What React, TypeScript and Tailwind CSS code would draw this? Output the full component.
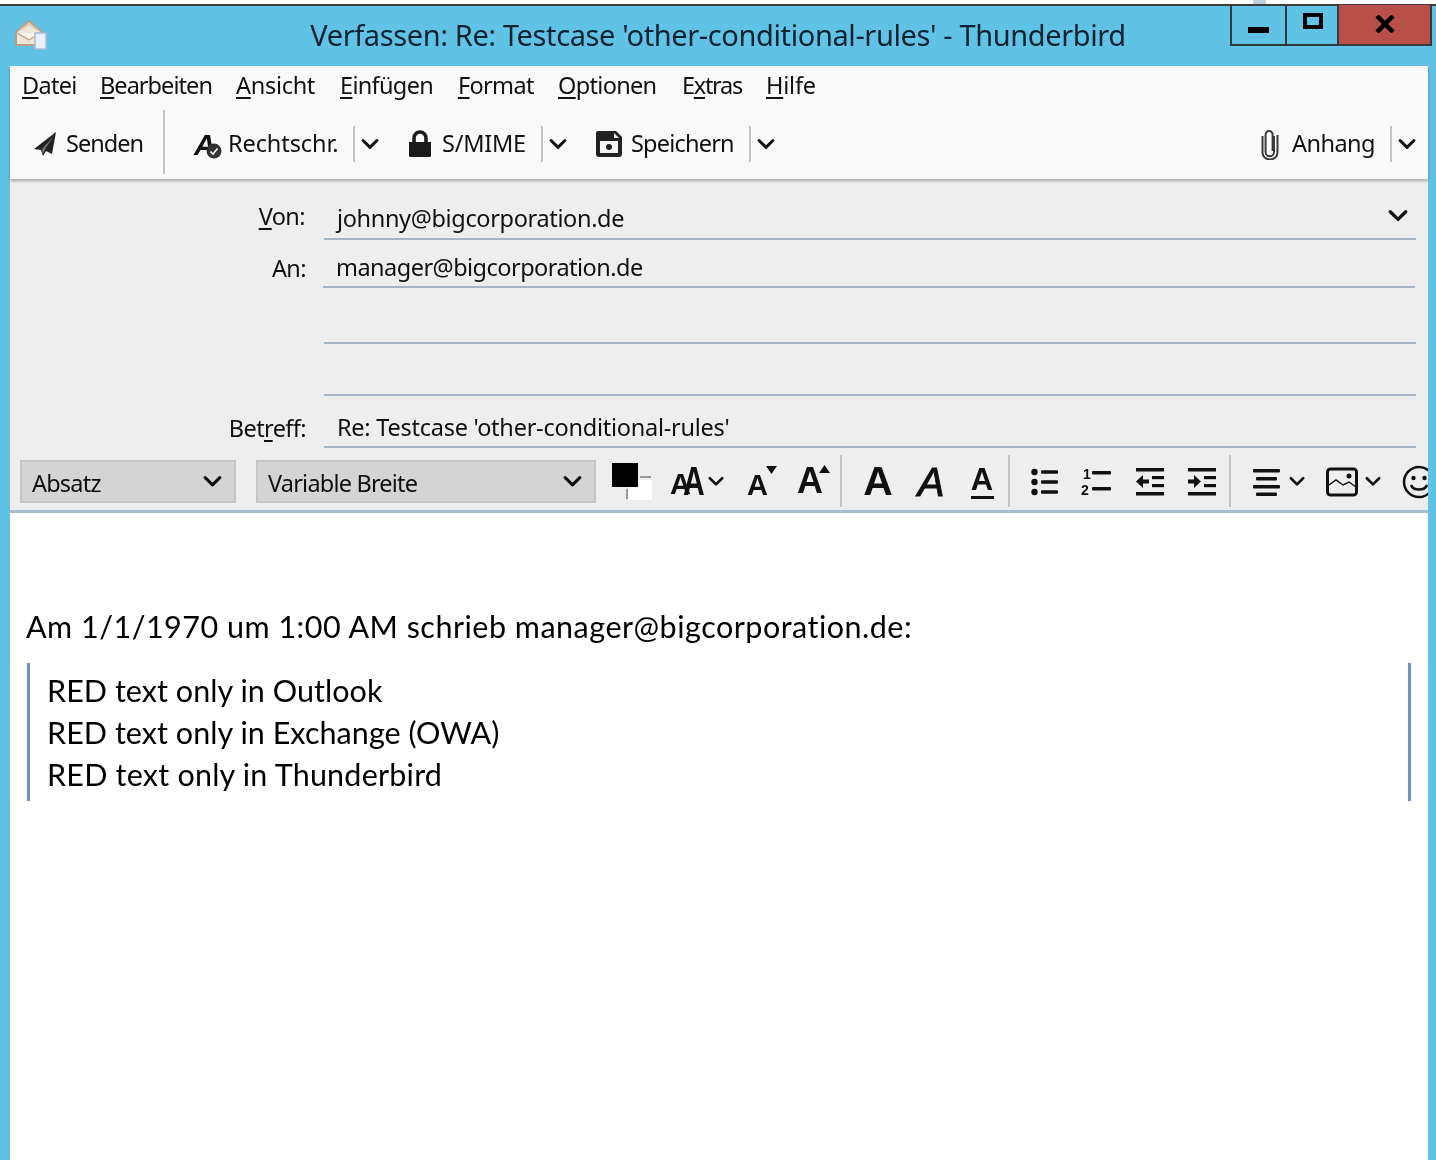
import React from "react";

const ui = { fontFamily: '"Noto Sans", sans-serif' };

function Chevron({ size = 18, sw = 3 }: { size?: number; sw?: number }) {
  return (
    <svg width={size} height={size * 0.66} viewBox="0 0 18 12" fill="none" stroke="#111" strokeWidth={sw} strokeLinecap="round" strokeLinejoin="round" className="shrink-0">
      <path d="M2 2.500 9 9.500 16 2.500" />
    </svg>
  );
}

function VSep({ h = 36 }: { h?: number }) {
  return <div className="w-[2px] bg-[#c4c4c4] shrink-0" style={{ height: h }} />;
}

function MenuItem({ pre = "", u, post, cls = "" }: { pre?: string; u: string; post: string; cls?: string }) {
  return (
    <span className={`whitespace-nowrap ${cls}`}>
      {pre}
      <span className="underline underline-offset-[3px] decoration-[1.5px]">{u}</span>
      {post}
    </span>
  );
}

function Field({ h, label, value, chevron, labelCls = "", valueCls = "" }: { h: number; label?: React.ReactNode; value?: string; chevron?: boolean; labelCls?: string; valueCls?: string }) {
  return (
    <div className="flex items-end" style={{ height: h }}>
      <div className={`w-[296px] shrink-0 text-right text-[23.5px] leading-[38px] tracking-[-0.6px] text-[#111] ${labelCls}`}>
        {label}
      </div>
      <div className="ml-[18px] w-[1092px] h-full border-b-2 border-[#a6b4c6] flex items-end justify-between pl-[13px] pr-[8px] text-[23.5px] leading-[38px] text-[#111]">
        <span className={valueCls}>{value}</span>
        {chevron && <span className="mb-[16px]"><Chevron size={20} /></span>}
      </div>
    </div>
  );
}

function SelectBox({ w, label }: { w: number; label: string }) {
  return (
    <div className="h-[43px] bg-[#d4d4d4] border-2 border-[#c6c6c6] flex items-center justify-between pl-[10px] pr-[12px] text-[23.5px] tracking-[-0.8px] text-[#111] shrink-0" style={{ width: w }}>
      <span className="pt-[5px]">{label}</span>
      <Chevron size={19} />
    </div>
  );
}

function GlyphA({ size, cls = "font-bold", italic }: { size: number; cls?: string; italic?: boolean }) {
  return (
    <span className={`${cls} ${italic ? "italic" : ""} text-[#111] leading-none`} style={{ fontSize: size, fontFamily: '"Liberation Sans", sans-serif' }}>
      A
    </span>
  );
}

export default function App() {
  return (
    <div className="w-[1436px] h-[1160px] overflow-hidden bg-[#60c3e6] flex flex-col blur-[0.5px]" style={ui}>
      {/* top sliver of the window behind */}
      <div className="h-[6px] bg-white border-b-[2px] border-[#3d3d3d] shrink-0">
        <div className="ml-[1253px] w-[13px] h-full bg-[#bfd0dc]" />
      </div>

      {/* title bar */}
      <div className="h-[60px] shrink-0 flex items-start">
        <div className="w-[206px] pl-[14px] pt-[12px] shrink-0">
          <svg width="34" height="34" viewBox="0 0 34 34">
            <path d="M2 14 15 3 28 14V27H2Z" fill="#efe6da" stroke="#b99e84" strokeWidth="2" strokeLinejoin="round" />
            <path d="M3 15 15 22 27 15" fill="#fbf6ee" stroke="#c8ae94" strokeWidth="1.500" />
            <path d="M6 12 15 6 24 12" fill="none" stroke="#d8c7b4" strokeWidth="2" />
            <rect x="21" y="15" width="11" height="16" fill="#eaf0fb" stroke="#a9bbd8" strokeWidth="1.500" />
          </svg>
        </div>
        <div className="flex-1 text-center text-[29px] leading-[58px] tracking-[-0.39px] text-[#0b2230] whitespace-nowrap">
          Verfassen: Re: Testcase 'other-conditional-rules' - Thunderbird
        </div>
        <div className="w-[206px] shrink-0 flex h-[42px] -mt-[1px]">
          <div className="w-[57px] h-[41px] border-2 border-t-0 border-[#2f3a40] flex items-center justify-center">
            <div className="w-[21px] h-[6px] bg-black mt-[10px]" />
          </div>
          <div className="w-[52px] h-[41px] border-b-2 border-r-2 border-[#2f3a40] flex items-center justify-center">
            <div className="w-[20px] h-[16px] border-[4px] border-black -mt-[8px] ml-[2px]" />
          </div>
          <div className="w-[93px] h-[41px] bg-[#b94f48] border-b-2 border-r-2 border-[#3a3a3a] flex items-start justify-center pt-[10px]">
            <svg width="20" height="18" viewBox="0 0 20 18" stroke="#000" strokeWidth="4.500"><path d="M2 1 18 17M18 1 2 17" /></svg>
          </div>
        </div>
      </div>

      {/* window body */}
      <div className="ml-[10px] w-[1418px] flex-1 flex flex-col min-h-0">
        {/* menu + toolbar */}
        <div className="h-[113px] bg-[#f9f9f9] shrink-0 shadow-[0_2px_3px_rgba(0,0,0,0.3)] relative z-10">
          <div className="flex gap-[24px] pl-[12px] h-[42px] items-center text-[23.5px] tracking-[-0.68px] text-[#111] -mt-[1px]">
            <MenuItem u="D" post="atei" cls="w-[54px]" />
            <MenuItem u="B" post="earbeiten" cls="w-[112px] tracking-[-0.95px]" />
            <MenuItem u="A" post="nsicht" cls="w-[80px] tracking-[-0.3px]" />
            <MenuItem u="E" post="infügen" cls="w-[94px]" />
            <MenuItem u="F" post="ormat" cls="w-[76px]" />
            <MenuItem u="O" post="ptionen" cls="w-[100px]" />
            <MenuItem pre="E" u="x" post="tras" cls="w-[60px] tracking-[-1.3px]" />
            <MenuItem u="H" post="ilfe" cls="tracking-[-0.2px]" />
          </div>
          <div className="flex items-center h-[71px] mt-[1px] text-[23.5px] text-[#111]">
            <div className="ml-[22px] mr-[10px] w-[25px] flex justify-center">
              <svg width="24" height="28" viewBox="0 0 24 26" fill="#222"><path d="M23 1 1 18l7 1 2 6 3-5 6 3Z" /><path d="M21 5 9 18l1 5 2-5Z" fill="#777" /></svg>
            </div>
            <span className="w-[78px] -ml-[1px] mr-[1px] tracking-[-1px]">Senden</span>
            <div className="ml-[18px] -mt-[3px]"><VSep h={64} /></div>
            <div className="ml-[27px] w-[30px] h-[32px] relative">
              <span className="absolute left-[2px] top-[1px]"><GlyphA size={30} cls="font-bold" italic /></span>
              <svg className="absolute left-[14px] top-[15px]" width="16" height="16" viewBox="0 0 16 16"><circle cx="8" cy="8" r="7.500" fill="#333" /><path d="M4.500 8.500 7 11l4.500-5.500" fill="none" stroke="#fff" strokeWidth="1.600" /></svg>
            </div>
            <span className="ml-[6px] w-[110px] whitespace-nowrap tracking-[-0.1px]">Rechtschr.</span>
            <div className="ml-[15px]"><VSep /></div>
            <div className="ml-[6px]"><Chevron /></div>
            <div className="ml-[29px] w-[24px] flex justify-center">
              <svg width="24" height="28" viewBox="0 0 24 28" fill="#1a1a1a"><path d="M1 12h22v13.500a1.500 1.500 0 0 1-1.500 1.500h-19A1.500 1.500 0 0 1 1 25.500Z" /><path d="M6 13V8a6 6 0 0 1 12 0v5" fill="none" stroke="#1a1a1a" strokeWidth="3.500" /></svg>
            </div>
            <span className="ml-[10px] w-[84px] tracking-[-0.25px]">S/MIME</span>
            <div className="ml-[15px]"><VSep /></div>
            <div className="ml-[6px]"><Chevron /></div>
            <div className="ml-[28px] w-[28px] flex justify-center">
              <svg width="28" height="28" viewBox="0 0 28 28"><path d="M3 1h18l6 6v17a3 3 0 0 1-3 3H4a3 3 0 0 1-3-3V3a2 2 0 0 1 2-2Z" fill="#222" /><path d="M5 11h18v12H5Z" fill="#f5f5f5" /><path d="M19 3l5 5h-5Z" fill="#f5f5f5" /><circle cx="14" cy="17" r="3" fill="#222" /></svg>
            </div>
            <span className="ml-[8px] w-[104px] tracking-[-0.8px]">Speichern</span>
            <div className="ml-[14px]"><VSep /></div>
            <div className="ml-[6px]"><Chevron /></div>
            <div className="ml-auto w-[20px] flex justify-center">
              <svg width="20" height="32" viewBox="0 0 20 32" fill="none" stroke="#3a3a3a" strokeWidth="2"><path d="M14 8v16a4.200 4.200 0 0 1-8.400 0V6.500a3.500 3.500 0 0 1 7 0V23" /><path d="M17.500 7v17.500a7.500 7 0 0 1-15 0V8" /></svg>
            </div>
            <span className="ml-[12px] w-[84px] tracking-[-0.55px]">Anhang</span>
            <div className="ml-[14px]"><VSep /></div>
            <div className="ml-[6px] mr-[12px]"><Chevron /></div>
          </div>
        </div>

        {/* address area */}
        <div className="bg-[#eeeeee] h-[334px] shrink-0 flex flex-col border-b-[3px] border-[#a9bdd0]">
          <div>
            <Field h={61} label={<MenuItem u="V" post="on:" />} value="johnny@bigcorporation.de" chevron labelCls="pb-[5px] pr-[1px]" valueCls="tracking-[-0.35px] pb-[1px]" />
            <Field h={48} label="An:" value="manager@bigcorporation.de" labelCls="pb-[1px] -mr-[1px]" valueCls="tracking-[-0.53px]" />
            <Field h={56} />
            <Field h={52} />
            <Field h={52} label={<MenuItem pre="Bet" u="r" post="eff:" />} value="Re: Testcase 'other-conditional-rules'" labelCls="pb-[1px]" valueCls="tracking-[-0.25px]" />
          </div>

          {/* format toolbar */}
          <div className="flex items-center pl-[10px] pt-[4px] h-[62px] overflow-hidden">
            <SelectBox w={216} label="Absatz" />
            <div className="ml-[20px]"><SelectBox w={340} label="Variable Breite" /></div>
            <div className="ml-[16px] w-[40px] h-[37px] relative shrink-0">
              <div className="absolute left-[16px] top-[17px] w-[24px] h-[20px] bg-white" />
              <div className="absolute left-0 top-0 w-[26px] h-[24px] bg-black" />
              <div className="absolute left-[28px] top-[13px] w-[11px] h-[2px] bg-[#999]" />
              <div className="absolute left-[14px] top-[26px] w-[2px] h-[10px] bg-[#999]" />
            </div>
            <div className="ml-[18px] w-[32px] h-[34px] relative shrink-0">
              <span className="absolute left-0 top-[6px]"><GlyphA size={29} /></span>
              <span className="absolute left-[13px] top-[-3px] scale-x-75 origin-left"><GlyphA size={40} /></span>
            </div>
            <div className="ml-[6px]"><Chevron size={16} /></div>
            <div className="ml-[23px] w-[30px] h-[34px] relative shrink-0">
              <span className="absolute left-0 top-[7px]"><GlyphA size={29} /></span>
              <svg className="absolute left-[19px] top-[2px]" width="11" height="8" viewBox="0 0 11 8" fill="#111"><path d="M0 0h11L5.500 8Z" /></svg>
            </div>
            <div className="ml-[20px] w-[32px] h-[34px] relative shrink-0">
              <span className="absolute left-0 top-[-1px]"><GlyphA size={36} /></span>
              <svg className="absolute left-[22px] top-[1px]" width="11" height="8" viewBox="0 0 11 8" fill="#111"><path d="M0 8h11L5.500 0Z" /></svg>
            </div>
            <div className="ml-[11px]"><VSep h={52} /></div>
            <div className="ml-[21px] w-[30px] flex justify-center shrink-0 pt-[1px]"><GlyphA size={41} cls="font-black" /></div>
            <div className="ml-[24px] w-[28px] flex justify-center shrink-0 pt-[1px]"><GlyphA size={40} cls="font-normal [-webkit-text-stroke:1px_#111]" italic /></div>
            <div className="ml-[24px] w-[26px] flex flex-col items-center shrink-0">
              <GlyphA size={31} />
              <div className="w-[23px] h-[3px] bg-[#111] mt-[1px]" />
            </div>
            <div className="ml-[13px]"><VSep h={52} /></div>
            <svg className="ml-[21px] shrink-0 mt-[2px]" width="28" height="28" viewBox="0 0 28 28" fill="#111">
              <circle cx="3.500" cy="4" r="3.200" /><circle cx="3.500" cy="14" r="3.200" /><circle cx="3.500" cy="24" r="3.200" />
              <rect x="10" y="2.200" width="17" height="3.600" rx="1" /><rect x="10" y="12.200" width="17" height="3.600" rx="1" /><rect x="10" y="22.200" width="17" height="3.600" rx="1" />
            </svg>
            <svg className="ml-[22px] shrink-0 mt-[2px]" width="32" height="30" viewBox="0 0 32 30" fill="#111">
              <text x="2" y="12" fontSize="14" fontWeight="700" fontFamily="Liberation Sans">1</text>
              <text x="0" y="28" fontSize="14" fontWeight="700" fontFamily="Liberation Sans">2</text>
              <rect x="11" y="4" width="19" height="3.600" rx="1" /><rect x="11" y="20" width="19" height="3.600" rx="1" />
            </svg>
            <svg className="ml-[22px] shrink-0 mt-[2px]" width="30" height="30" viewBox="0 0 30 30" fill="#111">
              <rect x="1" y="1" width="28" height="3.500" /><rect x="1" y="25" width="28" height="3.500" />
              <rect x="17" y="9" width="12" height="3.200" /><rect x="17" y="17" width="12" height="3.200" />
              <path d="M1 14.500 8 8v4.500h6v4H8V21Z" />
            </svg>
            <svg className="ml-[22px] shrink-0 mt-[2px]" width="30" height="30" viewBox="0 0 30 30" fill="#111">
              <rect x="1" y="1" width="28" height="3.500" /><rect x="1" y="25" width="28" height="3.500" />
              <rect x="17" y="9" width="12" height="3.200" /><rect x="17" y="17" width="12" height="3.200" />
              <path d="M14 14.500 7 8v4.500H1v4h6V21Z" />
            </svg>
            <div className="ml-[12px]"><VSep h={52} /></div>
            <svg className="ml-[22px] shrink-0 mt-[2px]" width="27" height="28" viewBox="0 0 27 28" fill="#111">
              <rect x="0" y="1" width="27" height="3.600" rx="1" /><rect x="3" y="9" width="21" height="3.600" rx="1" /><rect x="0" y="17" width="27" height="3.600" rx="1" /><rect x="3" y="24.400" width="21" height="3.600" rx="1" />
            </svg>
            <div className="ml-[9px]"><Chevron size={16} /></div>
            <svg className="ml-[21px] shrink-0 mt-[2px]" width="32" height="30" viewBox="0 0 32 30" fill="none" stroke="#111">
              <rect x="1.500" y="2" width="29" height="26" rx="3" strokeWidth="3" />
              <circle cx="23" cy="9" r="2.500" fill="#111" stroke="none" />
              <path d="M3 18l7-5 7 5 6-3 7 5" strokeWidth="1.500" />
            </svg>
            <div className="ml-[7px]"><Chevron size={16} /></div>
            <svg className="ml-[21px] shrink-0 mt-[2px]" width="34" height="34" viewBox="0 0 34 34" fill="none" stroke="#111">
              <circle cx="17" cy="17" r="15" strokeWidth="2.500" />
              <circle cx="11.500" cy="13" r="2.200" fill="#111" stroke="none" /><circle cx="22.500" cy="13" r="2.200" fill="#111" stroke="none" />
              <path d="M9 20c2 6 14 6 16 0" strokeWidth="2.500" />
            </svg>
          </div>
        </div>

        {/* message body */}
        <div className="flex-1 bg-white pl-[16px] pr-[16px] text-black" style={{ fontFamily: "Lato, sans-serif" }}>
          <p className="mt-[92px] text-[30.5px] leading-[42px] tracking-[0.5px]">
            Am 1/1/1970 um 1:00 AM schrieb manager@bigcorporation.de:
          </p>
          <blockquote className="mt-[16px] ml-[1px] mr-[1px] border-x-[3px] border-[#6f93c4] pl-[17px] py-[6px] text-[30.5px] leading-[42px]">
            <div className="tracking-[0.05px]">RED text only in Outlook</div>
            <div className="tracking-[0.05px]">RED text only in Exchange (OWA)</div>
            <div className="tracking-[0.22px]">RED text only in Thunderbird</div>
          </blockquote>
        </div>
      </div>
    </div>
  );
}
